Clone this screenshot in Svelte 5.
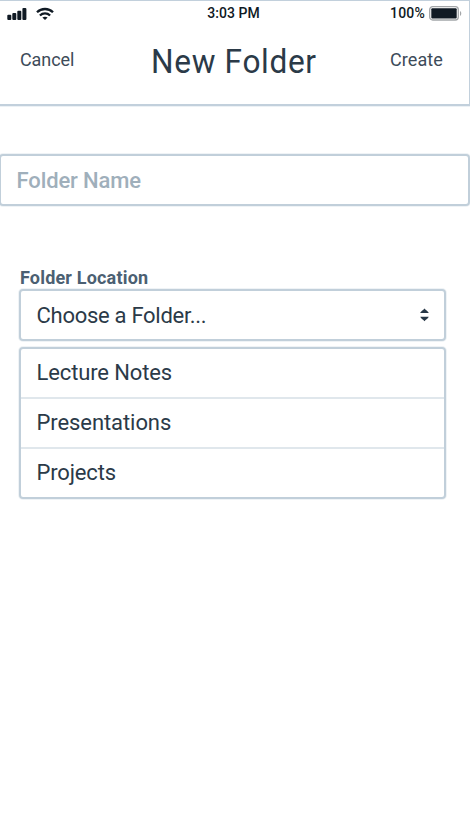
<script>
  let folderName = $state('');
  const folders = [
    { name: 'Lecture Notes', spacing: -0.13 },
    { name: 'Presentations', spacing: -0.08 },
    { name: 'Projects', spacing: -0.15 }
  ];
</script>

<main>
  <header>
    <div class="status">
      <div class="left">
        <svg width="21" height="14" viewBox="0 0 21 14" fill="#101a24">
          <rect x="0.3" y="7.7" width="4" height="5.3" rx="1" />
          <rect x="5.3" y="6" width="4" height="7" rx="1" />
          <rect x="10.3" y="3.7" width="4" height="9.3" rx="1" />
          <rect x="15.4" y="1" width="4" height="12" rx="1" />
        </svg>
        <svg class="wifi" width="18" height="14" viewBox="0 0 18 14" fill="none" stroke="#101a24" stroke-width="2.3">
          <path d="M1 5.3C5.4 .9 12.6 .9 17 5.3" />
          <path d="M3.9 8.5C6.8 5.7 11.2 5.7 14.1 8.5" />
          <path d="M9 13L6.4 10.6C7.8 9.3 10.2 9.3 11.6 10.6Z" fill="#101a24" stroke="none" />
        </svg>
      </div>
      <span class="time">3:03 PM</span>
      <div class="power">
        <span class="percent">100%</span>
        <svg width="33" height="15" viewBox="0 0 33 15">
          <rect x=".7" y=".7" width="28.6" height="13.3" rx="3" fill="#fff" stroke="#a3a6a9" stroke-width="1.3" />
          <rect x="2.3" y="2.3" width="25.4" height="10.2" rx="1" fill="#101a24" />
          <path d="M31 5C32.7 5.7 32.7 9.3 31 10Z" fill="#a3a6a9" />
        </svg>
      </div>
    </div>
    <nav>
      <button class="cancel">Cancel</button>
      <h1>New Folder</h1>
      <button class="create">Create</button>
    </nav>
  </header>

  <input class="box name" placeholder="Folder Name" aria-label="Folder Name" bind:value={folderName} />

  <section>
    <h2>Folder Location</h2>
    <div class="box select">
      <span class="choice">Choose a Folder...</span>
      <svg width="9" height="14" viewBox="0 0 9 14" fill="#263746">
        <path d="M.3 5C.3 3.8 3.4 1.8 4.5.4C5.6 1.8 8.7 3.8 8.7 5Z" />
        <path d="M.3 8.7H8.7C8.7 9.9 5.6 11.7 4.5 13.3C3.4 11.7.3 9.9.3 8.7Z" />
      </svg>
    </div>
    <ul class="box">
      {#each folders as folder}
        <li><span style="letter-spacing: {folder.spacing}px">{folder.name}</span></li>
      {/each}
    </ul>
  </section>
</main>

<style>
  :global(body) { margin: 0; background: #fff; }
  * { box-sizing: border-box; }
  main {
    width: 470px;
    height: 835px;
    overflow: hidden;
    background: #fff;
    color: #2b3a48;
    font-family: Roboto, "Liberation Sans", sans-serif;
  }
  header {
    height: 106px;
    border: 1px solid #c2d0dc;
    border-left: 0;
    border-bottom-width: 2px;
    box-shadow: 0 1px #ecf1f5;
  }
  .status {
    display: grid;
    grid-template-columns: 1fr auto 1fr;
    align-items: center;
    height: 23px;
    padding: 0 7px;
    font-size: 14px;
    line-height: 25px;
    font-weight: 500;
    color: #101a24;
  }
  .left { display: flex; gap: 8px; }
  .time { padding-right: 2px; letter-spacing: .05px; }
  .percent { letter-spacing: .2px; }
  .power { display: flex; align-items: center; justify-content: flex-end; gap: 4px; }
  nav {
    display: grid;
    grid-template-columns: 1fr auto 1fr;
    align-items: center;
    height: 74px;
    padding: 0 26px 0 20px;
  }
  button {
    border: 0;
    padding: 0 0 2px;
    background: none;
    color: #3d4b59;
    font: 400 18px/22px Roboto, sans-serif;
    letter-spacing: -.1px;
    justify-self: start;
  }
  .create { justify-self: end; letter-spacing: .1px; }
  h1 {
    margin: 0;
    padding-left: 5px;
    font-size: 34px;
    line-height: 40px;
    font-weight: 400;
    letter-spacing: .7px;
    transform: scaleX(.93);
  }
  .box {
    display: flex;
    border: 2px solid #c1cfda;
    border-radius: 4px;
    box-shadow: 0 0 0 1px #eff3f6;
    background: #fff;
    font-size: 22px;
  }
  .name {
    width: 471px;
    height: 52px;
    margin: 48px 0 0 -1px;
    padding: 0 15.6px;
    outline: 0;
    font: 500 22px/28px Roboto, sans-serif;
    letter-spacing: -.13px;
  }
  .name::placeholder { color: #9fafbb; opacity: 1; }
  section { width: 427px; margin: 61px 0 0 19px; }
  h2 {
    margin: 0;
    padding-left: 1px;
    height: 22px;
    font-size: 18px;
    line-height: 22px;
    font-weight: 700;
    letter-spacing: .18px;
    color: #4b6072;
  }
  .select {
    align-items: center;
    justify-content: space-between;
    height: 52px;
    padding: 0 15px 0 15.5px;
  }
  .choice { letter-spacing: -.28px; }
  ul {
    flex-direction: column;
    margin: 6px 0 0;
    padding: 0;
    list-style: none;
  }
  li {
    height: 50px;
    padding-left: 15.5px;
    line-height: 48px;
    border-bottom: 2px solid #e0e7ec;
  }
  li:last-child { height: 48px; border: 0; }
</style>
